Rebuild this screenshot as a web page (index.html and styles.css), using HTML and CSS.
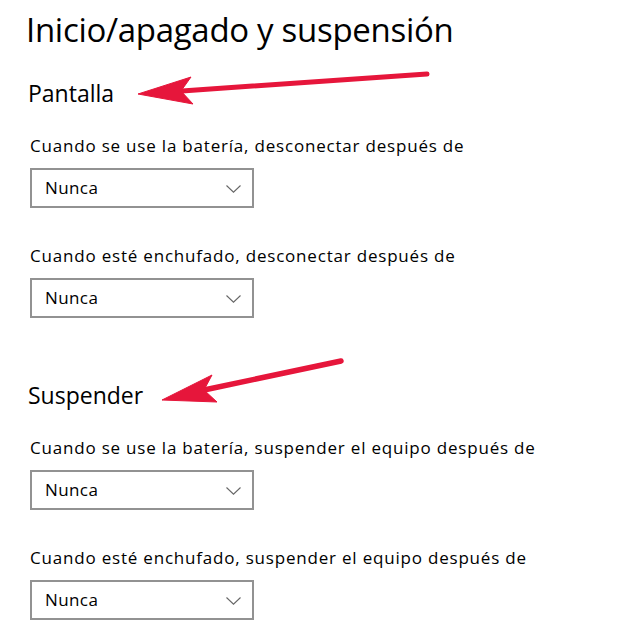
FILE: index.html
```html
<!DOCTYPE html>
<html lang="es">
<head>
<meta charset="utf-8">
<title>Inicio/apagado y suspensión</title>
<link rel="stylesheet" href="styles.css">
</head>
<body>
<main class="page">
  <h1 class="title">Inicio/apagado y suspensión</h1>

  <section class="group">
    <h2 class="heading">Pantalla</h2>
    <div class="setting">
      <p class="label">Cuando se use la batería, desconectar después de</p>
      <div class="select"><span>Nunca</span><svg class="chev" width="15" height="8" viewBox="0 0 15 8"><path d="M0.5 0.5 L7.5 7.2 L14.5 0.5" fill="none" stroke="#666" stroke-width="1.1"/></svg></div>
    </div>
    <div class="setting">
      <p class="label">Cuando esté enchufado, desconectar después de</p>
      <div class="select"><span>Nunca</span><svg class="chev" width="15" height="8" viewBox="0 0 15 8"><path d="M0.5 0.5 L7.5 7.2 L14.5 0.5" fill="none" stroke="#666" stroke-width="1.1"/></svg></div>
    </div>
  </section>

  <section class="group group-2">
    <h2 class="heading">Suspender</h2>
    <div class="setting">
      <p class="label">Cuando se use la batería, suspender el equipo después de</p>
      <div class="select"><span>Nunca</span><svg class="chev" width="15" height="8" viewBox="0 0 15 8"><path d="M0.5 0.5 L7.5 7.2 L14.5 0.5" fill="none" stroke="#666" stroke-width="1.1"/></svg></div>
    </div>
    <div class="setting">
      <p class="label">Cuando esté enchufado, suspender el equipo después de</p>
      <div class="select"><span>Nunca</span><svg class="chev" width="15" height="8" viewBox="0 0 15 8"><path d="M0.5 0.5 L7.5 7.2 L14.5 0.5" fill="none" stroke="#666" stroke-width="1.1"/></svg></div>
    </div>
  </section>

  <svg class="arrows" width="620" height="642" viewBox="0 0 620 642">
    <g fill="#e6163b" stroke="#e6163b">
      <line x1="427" y1="74" x2="182" y2="91" stroke-width="5" stroke-linecap="round"/>
      <polygon points="138,94 191,77 181,91 193,104" stroke-width="1" stroke-linejoin="round"/>
      <line x1="341" y1="361" x2="204" y2="390" stroke-width="5.5" stroke-linecap="round"/>
      <polygon points="162,400 212,375 204,390 217,402" stroke-width="1" stroke-linejoin="round"/>
    </g>
  </svg>
</main>
</body>
</html>
```

FILE: styles.css
```css
html, body {
  margin: 0;
  padding: 0;
  background: #ffffff;
}

.page {
  position: relative;
  width: 620px;
  height: 642px;
  overflow: hidden;
  padding-left: 26px;
  box-sizing: border-box;
  font-family: "Open Sans", "Noto Sans", sans-serif;
  color: #000;
}

.title {
  margin: 8px 0 0 0;
  font-size: 33px;
  line-height: 44px;
  font-weight: 400;
  letter-spacing: -0.3px;
}

.heading {
  margin: 0;
  padding-left: 2px;
  font-size: 23px;
  line-height: 28px;
  font-weight: 400;
}

.group {
  margin-top: 27px;
}

.group-2 {
  margin-top: 63px;
}

.setting {
  padding-left: 4px;
  margin-top: 38px;
}

.heading + .setting {
  margin-top: 29px;
}

.label {
  margin: 0;
  font-size: 17px;
  line-height: 20px;
  letter-spacing: 0.8px;
}

.select {
  margin-top: 12px;
  width: 224px;
  height: 40px;
  box-sizing: border-box;
  border: 2px solid #929292;
  display: flex;
  align-items: center;
  justify-content: space-between;
  padding: 0 11px 0 13px;
  font-size: 17px;
  line-height: 36px;
  letter-spacing: 0.4px;
}

.chev {
  display: block;
  margin-top: 1px;
}

.arrows {
  position: absolute;
  left: 0;
  top: 0;
  pointer-events: none;
}
```
